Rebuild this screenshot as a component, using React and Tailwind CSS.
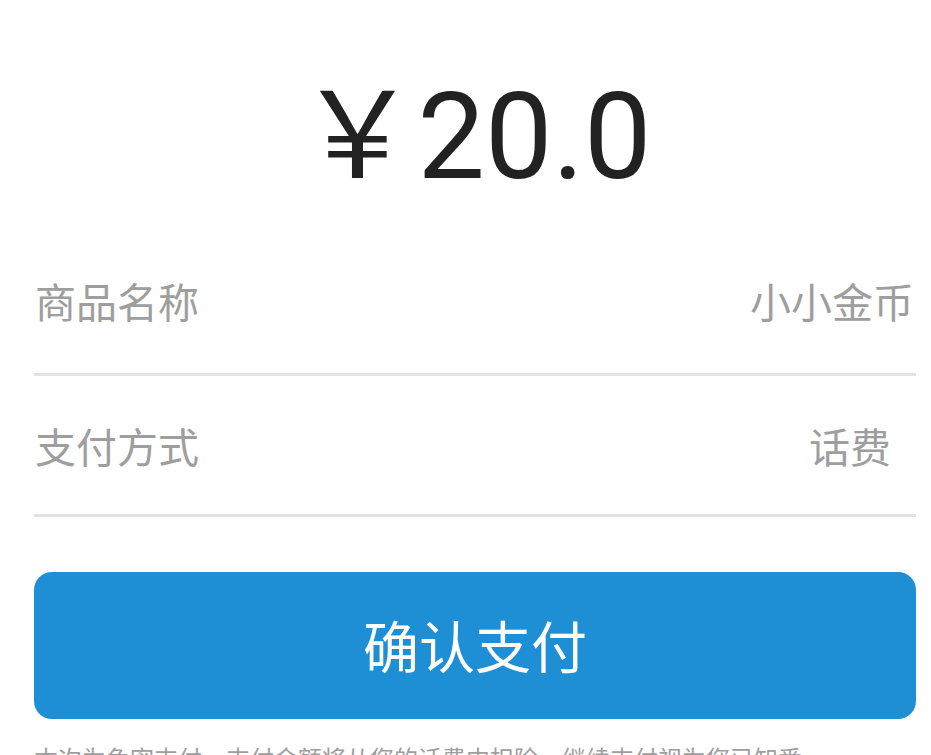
export default function App() {
  return (
    <div className="w-[931px] h-[755px] overflow-hidden bg-white">
      <div className="font-['Roboto','Noto_Sans_CJK_SC',sans-serif]">
        <div className="h-[235px] flex justify-center pt-[77px] pl-[18px]">
          <div className="text-[120px] leading-none text-[#222222]">￥20.0</div>
        </div>
        <div className="ml-[34px] mr-[15px]">
          <div className="h-[141px] flex items-center justify-between border-b-[3px] border-[#e3e3e3] pb-[6px] text-[41px] text-[#9e9e9e] font-['Noto_Sans_CJK_SC',sans-serif]">
            <span className="pl-[1px]">商品名称</span>
            <span className="pr-[2px]">小小金币</span>
          </div>
          <div className="h-[141px] flex items-center justify-between border-b-[3px] border-[#e3e3e3] pt-[2px] text-[41px] text-[#9e9e9e] font-['Noto_Sans_CJK_SC',sans-serif]">
            <span className="pl-[1px]">支付方式</span>
            <span className="pr-[25px]">话费</span>
          </div>
          <button className="mt-[55px] w-full h-[147px] rounded-[18px] bg-[#1e8fd4] text-white text-[56px] flex items-center justify-center pb-[4px] font-['Noto_Sans_CJK_SC',sans-serif]">
            确认支付
          </button>
          <div className="mt-[22px] text-[24px] leading-[34px] text-[#9e9e9e] font-['Noto_Sans_CJK_SC',sans-serif] whitespace-nowrap">
            本次为免密支付，支付金额将从您的话费中扣除，继续支付视为您已知悉
          </div>
        </div>
      </div>
    </div>
  );
}
